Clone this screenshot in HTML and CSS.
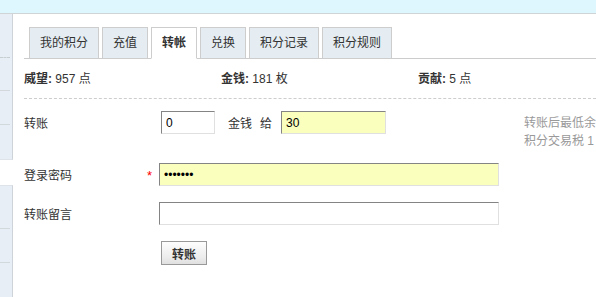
FILE: index.html
```html
<!DOCTYPE html>
<html lang="zh-CN">
<head>
<meta charset="utf-8">
<title>积分 - 转帐</title>
<link rel="stylesheet" href="styles.css">
</head>
<body>
<div class="topbar"></div>
<div class="layout">
  <aside class="sidebar">
    <div class="side-block side-block-1">
      <div class="side-item first"></div>
      <div class="side-item"></div>
      <div class="side-item"></div>
      <div class="side-item last"></div>
    </div>
    <div class="side-block side-block-2">
      <div class="side-item first2"></div>
      <div class="side-item"></div>
      <div class="side-item last"></div>
    </div>
  </aside>
  <main class="main">
    <ul class="tabs">
      <li class="tab"><a>我的积分</a></li>
      <li class="tab"><a>充值</a></li>
      <li class="tab active"><a>转帐</a></li>
      <li class="tab"><a>兑换</a></li>
      <li class="tab"><a>积分记录</a></li>
      <li class="tab"><a>积分规则</a></li>
    </ul>
    <ul class="stats">
      <li><b>威望:</b> 957 点</li>
      <li><b>金钱:</b> 181 枚</li>
      <li><b>贡献:</b> 5 点</li>
    </ul>
    <form class="form">
      <div class="row row-amount">
        <label class="label label-wide">转账</label>
        <input class="px px-amount" type="text" value="0">
        <span class="unit">金钱</span>
        <span class="to">给</span>
        <input class="px px-user filled" type="text" value="30">
        <div class="note">
          <p>转账后最低余</p>
          <p>积分交易税 1</p>
        </div>
      </div>
      <div class="row row-pass">
        <label class="label">登录密码</label>
        <span class="rq">*</span>
        <input class="px px-long filled" type="password" value="1234567">
      </div>
      <div class="row row-msg">
        <label class="label">转账留言</label>
        <span class="rq"></span>
        <input class="px px-long" type="text" value="">
      </div>
      <div class="row row-btn">
        <button class="pn" type="button"><strong>转账</strong></button>
      </div>
    </form>
  </main>
</div>
</body>
</html>
```

FILE: styles.css
```css
html, body {
  margin: 0;
  padding: 0;
  overflow: hidden;
}
body {
  width: 596px;
  height: 297px;
  background: #fff;
  color: #333;
  font: 12px/1.5 "Liberation Sans", "Noto Sans CJK SC", sans-serif;
}
.topbar {
  height: 13px;
  background: #def6fd;
  border-bottom: 1px solid #cfd4d6;
}
.layout {
  display: flex;
  height: 283px;
}
.sidebar {
  flex: 0 0 13px;
  display: flex;
  flex-direction: column;
  gap: 25px;
}
.side-block {
  background: #e8eef5;
  border-right: 1px solid #cdd3d8;
  display: flex;
  flex-direction: column;
}
.side-block-1 {
  height: 146px;
  border-bottom: 1px solid #dde3e8;
  box-sizing: border-box;
}
.side-block-2 {
  flex: 1;
  border-top: 1px solid #dde3e8;
}
.side-item {
  height: 34px;
  width: 10px;
  border-bottom: 1px solid #d3d8dc;
  box-sizing: border-box;
}
.side-item.first {
  height: 44px;
  border-bottom: 1px dashed #c8cdd2;
}
.side-item.first2 {
  height: 43px;
}
.side-item.last {
  border-bottom: 0;
}
.main {
  flex: 1;
  padding-left: 11px;
  min-width: 0;
  overflow: hidden;
}
.tabs {
  list-style: none;
  margin: 13px 0 0;
  padding: 0 0 0 5px;
  display: flex;
  gap: 3px;
  border-bottom: 1px solid #cccccc;
  height: 31px;
}
.tab {
  height: 32px;
  box-sizing: border-box;
  border: 1px solid #cdcdcd;
  background: #e5edf2;
  margin-bottom: -1px;
}
.tab a {
  display: block;
  padding: 0 10px;
  line-height: 30px;
  color: #333;
  white-space: nowrap;
}
.tab.active {
  background: #fff;
  border-bottom-color: #fff;
}
.tab.active a {
  font-weight: bold;
}
.stats {
  list-style: none;
  margin: 0;
  padding: 13px 0 12px;
  display: flex;
  border-bottom: 1px dashed #cdcdcd;
  line-height: 14px;
}
.stats li {
  width: 197px;
  flex: 0 0 197px;
  white-space: nowrap;
}
.form {
  margin: 0;
  padding-top: 12px;
}
.row {
  display: flex;
  align-items: flex-start;
  white-space: nowrap;
}
.label {
  width: 123px;
  flex: 0 0 123px;
  line-height: 23px;
  padding-top: 2px;
}
.label-wide {
  width: 137px;
  flex: 0 0 137px;
}
.rq {
  width: 12px;
  flex: 0 0 12px;
  color: #f00;
  line-height: 22px;
  font-size: 13px;
  padding-top: 2px;
}
.px {
  box-sizing: border-box;
  height: 23px;
  border: 1px solid;
  border-color: #848484 #e0e0e0 #e0e0e0 #848484;
  padding: 2px 4px 1px;
  font: 12px "Liberation Sans", "Noto Sans CJK SC", sans-serif;
  color: #000;
  background: #fff;
  margin: 0;
  outline: none;
}
.filled {
  background: #faffbd;
}
.px-amount {
  width: 54px;
}
.unit {
  margin-left: 13px;
  line-height: 23px;
  padding-top: 2px;
}
.to {
  margin-left: 8px;
  line-height: 23px;
  padding-top: 2px;
}
.px-user {
  margin-left: 9px;
  width: 105px;
}
.px-long {
  width: 340px;
}
.note {
  margin-left: 138px;
  margin-top: 3px;
  color: #999;
  line-height: 18px;
}
.note p {
  margin: 0;
}
.row-amount {
  margin-bottom: 13px;
}
.row-pass {
  margin-bottom: 14px;
}
.row-msg {
  margin-bottom: 14px;
}
.row-btn {
  padding-left: 137px;
}
.pn {
  height: 24px;
  padding: 0 10px;
  border: 1px solid #999;
  background: linear-gradient(#fdfdfd, #ececec 70%, #e0e0e0);
  color: #333;
  font: 12px "Liberation Sans", "Noto Sans CJK SC", sans-serif;
  margin: 0;
}
.pn strong {
  font-weight: bold;
}
```
